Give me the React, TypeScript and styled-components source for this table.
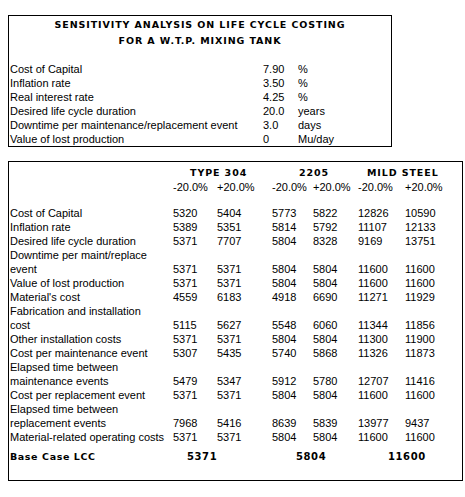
import React from "react";
import styled, { createGlobalStyle } from "styled-components";

const GlobalStyle = createGlobalStyle`
  html, body { margin: 0; padding: 0; background: #ffffff; }
  body {
    font-family: "Liberation Sans", Arial, sans-serif;
    font-size: 11px;
    color: #000000;
  }
`;

const Page = styled.div`
  display: flex;
  flex-direction: column;
  align-items: flex-start;
  gap: 14px;
  padding: 15px 0 0 8px;
`;

const Panel = styled.section<{ $width: number; $pad: string }>`
  box-sizing: border-box;
  width: ${(p) => p.$width}px;
  border: 1px solid #000000;
  padding: ${(p) => p.$pad};
  display: flex;
  flex-direction: column;
`;

const Title = styled.h1`
  margin: 0 0 13px 0;
  font-family: "DejaVu Sans", "Liberation Sans", sans-serif;
  font-weight: 900;
  font-size: 9.5px;
  letter-spacing: 0.9px;
  line-height: 16px;
  text-align: center;
  text-transform: uppercase;
`;

const ParamGrid = styled.div`
  display: grid;
  grid-template-columns: 253px 35px 1fr;
  line-height: 14px;
  padding-left: 1px;
  white-space: nowrap;
`;

const Cell = styled.div`
  white-space: nowrap;
`;

const TableGrid = styled.div`
  display: grid;
  grid-template-columns: 163px 44px 55px 41px 45px 47px 1fr;
  line-height: 14px;
  padding-left: 1px;
`;

const GroupHead = styled.div<{ $col: number; $offset: number }>`
  grid-column: ${(p) => p.$col} / span 3;
  grid-row: 1;
  padding-left: ${(p) => p.$offset}px;
  font-family: "DejaVu Sans", "Liberation Sans", sans-serif;
  font-weight: 900;
  font-size: 9.5px;
  letter-spacing: 0.9px;
  line-height: 15px;
  white-space: nowrap;
`;

const PctCell = styled.div<{ $col: number }>`
  grid-column: ${(p) => p.$col};
  grid-row: 2;
  white-space: nowrap;
`;

const Spacer = styled.div<{ $h: number }>`
  grid-column: 1 / -1;
  height: ${(p) => p.$h}px;
`;

const Label = styled.div`
  grid-column: 1;
  white-space: pre-line;
`;

const Num = styled.div`
  align-self: end;
  white-space: nowrap;
`;

const BaseLabel = styled.div`
  grid-column: 1;
  font-family: "DejaVu Sans", "Liberation Sans", sans-serif;
  font-weight: 900;
  font-size: 9.5px;
  letter-spacing: 0.6px;
`;

const BaseNum = styled.div<{ $col: number; $offset: number }>`
  grid-column: ${(p) => p.$col} / span 2;
  padding-left: ${(p) => p.$offset}px;
  font-family: "DejaVu Sans", "Liberation Sans", sans-serif;
  font-weight: 900;
  font-size: 10px;
  letter-spacing: 0.6px;
`;

const params: [string, string, string][] = [
  ["Cost of Capital", "7.90", "%"],
  ["Inflation rate", "3.50", "%"],
  ["Real interest rate", "4.25", "%"],
  ["Desired life cycle duration", "20.0", "years"],
  ["Downtime per maintenance/replacement event", "3.0", "days"],
  ["Value of lost production", "0", "Mu/day"],
];

const rows: [string, number[]][] = [
  ["Cost of Capital", [5320, 5404, 5773, 5822, 12826, 10590]],
  ["Inflation rate", [5389, 5351, 5814, 5792, 11107, 12133]],
  ["Desired life cycle duration", [5371, 7707, 5804, 8328, 9169, 13751]],
  ["Downtime per maint/replace\nevent", [5371, 5371, 5804, 5804, 11600, 11600]],
  ["Value of lost production", [5371, 5371, 5804, 5804, 11600, 11600]],
  ["Material's cost", [4559, 6183, 4918, 6690, 11271, 11929]],
  ["Fabrication and installation\ncost", [5115, 5627, 5548, 6060, 11344, 11856]],
  ["Other installation costs", [5371, 5371, 5804, 5804, 11300, 11900]],
  ["Cost per maintenance event", [5307, 5435, 5740, 5868, 11326, 11873]],
  ["Elapsed time between\nmaintenance events", [5479, 5347, 5912, 5780, 12707, 11416]],
  ["Cost per replacement event", [5371, 5371, 5804, 5804, 11600, 11600]],
  ["Elapsed time between\nreplacement events", [7968, 5416, 8639, 5839, 13977, 9437]],
  ["Material-related operating costs", [5371, 5371, 5804, 5804, 11600, 11600]],
];

const groups = [
  { name: "TYPE 304", col: 2, offset: 17, base: "5371", baseOffset: 14 },
  { name: "2205", col: 4, offset: 27, base: "5804", baseOffset: 24 },
  { name: "MILD STEEL", col: 6, offset: 9, base: "11600", baseOffset: 30 },
];

export default function App() {
  return (
    <>
      <GlobalStyle />
      <Page>
        <Panel $width={384} $pad="1px 0 0 0">
          <Title>
            Sensitivity analysis on life cycle costing
            <br />
            for a W.T.P. mixing tank
          </Title>
          <ParamGrid>
            {params.map(([label, value, unit]) => (
              <React.Fragment key={label}>
                <Cell>{label}</Cell>
                <Cell>{value}</Cell>
                <Cell>{unit}</Cell>
              </React.Fragment>
            ))}
          </ParamGrid>
        </Panel>
        <Panel $width={455} $pad="3px 0 16px 0">
          <TableGrid>
            {groups.map((g) => (
              <GroupHead key={g.name} $col={g.col} $offset={g.offset}>
                {g.name}
              </GroupHead>
            ))}
            {[2, 3, 4, 5, 6, 7].map((c, i) => (
              <PctCell key={c} $col={c}>
                {i % 2 === 0 ? "-20.0%" : "+20.0%"}
              </PctCell>
            ))}
            <Spacer $h={12} />
            {rows.map(([label, vals]) => (
              <React.Fragment key={label}>
                <Label>{label}</Label>
                {vals.map((v, i) => (
                  <Num key={i}>{v}</Num>
                ))}
              </React.Fragment>
            ))}
            <Spacer $h={6} />
            <BaseLabel>Base Case LCC</BaseLabel>
            {groups.map((g) => (
              <BaseNum key={g.name} $col={g.col} $offset={g.baseOffset}>
                {g.base}
              </BaseNum>
            ))}
          </TableGrid>
        </Panel>
      </Page>
    </>
  );
}
